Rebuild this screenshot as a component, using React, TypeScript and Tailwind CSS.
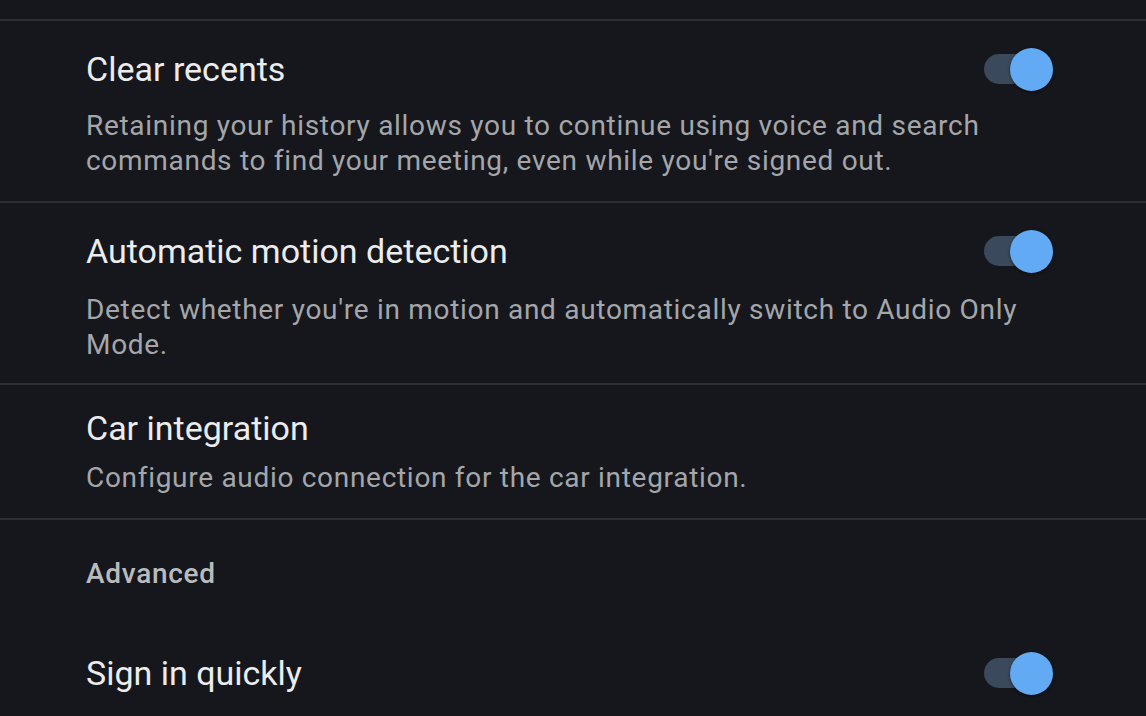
import { useState } from "react";

type ToggleProps = {
  on: boolean;
  onChange: () => void;
};

const Toggle = ({ on, onChange }: ToggleProps) => {
  return (
    <button
      type="button"
      role="switch"
      aria-checked={on}
      onClick={onChange}
      className="relative flex h-[44px] w-[70px] shrink-0 items-center"
    >
      <span
        className={
          on
            ? "absolute left-0 h-[30px] w-[58px] rounded-full bg-[#3a4a5c]"
            : "absolute left-0 h-[30px] w-[58px] rounded-full bg-[#4a4d52]"
        }
      />
      <span
        className={
          on
            ? "absolute left-[26px] h-[43px] w-[43px] rounded-full bg-[#62abf4] shadow-[0_1px_3px_rgba(0,0,0,0.6)]"
            : "absolute left-[-6px] h-[43px] w-[43px] rounded-full bg-[#c9cacc] shadow-[0_1px_3px_rgba(0,0,0,0.6)]"
        }
      />
    </button>
  );
};

const Divider = () => <div className="h-[2px] bg-[#2b2e33]" />;

type TitleRowProps = {
  title: string;
  on?: boolean;
  onChange?: () => void;
};

const TitleRow = ({ title, on, onChange }: TitleRowProps) => (
  <div className="flex h-[40px] items-center justify-between">
    <div className="text-[34px] leading-[40px] text-[#ececed]">{title}</div>
    {onChange && <Toggle on={!!on} onChange={onChange} />}
  </div>
);

export default function App() {
  const [clearRecents, setClearRecents] = useState(true);
  const [motion, setMotion] = useState(true);
  const [quickSignIn, setQuickSignIn] = useState(true);

  return (
    <div
      className="h-[716px] w-full overflow-hidden bg-[#15171c] antialiased"
      style={{ fontFamily: "Roboto, 'Noto Sans', sans-serif" }}
    >
      <div className="h-[19px]" />
      <Divider />

      {/* Clear recents */}
      <div className="pl-[86px] pr-[92px] pt-[28px] pb-[23px]">
        <TitleRow
          title="Clear recents"
          on={clearRecents}
          onChange={() => setClearRecents(!clearRecents)}
        />
        <div className="mt-[19px] whitespace-nowrap text-[28px] leading-[35px] tracking-[0.7px] text-[#a4a6aa]">
          Retaining your history allows you to continue using voice and search
          <br />
          commands to find your meeting, even while you're signed out.
        </div>
      </div>
      <Divider />

      {/* Automatic motion detection */}
      <div className="pl-[86px] pr-[92px] pt-[28px] pb-[21px]">
        <TitleRow
          title="Automatic motion detection"
          on={motion}
          onChange={() => setMotion(!motion)}
        />
        <div className="mt-[21px] whitespace-nowrap text-[28px] leading-[35px] tracking-[0.7px] text-[#a4a6aa]">
          Detect whether you're in motion and automatically switch to Audio Only
          <br />
          Mode.
        </div>
      </div>
      <Divider />

      {/* Car integration */}
      <div className="pl-[86px] pr-[92px] pt-[23px] pb-[23px]">
        <TitleRow title="Car integration" />
        <div className="mt-[12px] text-[28px] leading-[35px] tracking-[0.7px] text-[#a4a6aa]">
          Configure audio connection for the car integration.
        </div>
      </div>
      <Divider />

      {/* Advanced */}
      <div className="pl-[86px] pt-[36px] text-[28px] font-medium leading-[35px] tracking-[0.7px] text-[#b9bbbf]">
        Advanced
      </div>

      {/* Sign in quickly */}
      <div className="mt-[62px] pl-[86px] pr-[92px]">
        <TitleRow
          title="Sign in quickly"
          on={quickSignIn}
          onChange={() => setQuickSignIn(!quickSignIn)}
        />
      </div>
    </div>
  );
}
